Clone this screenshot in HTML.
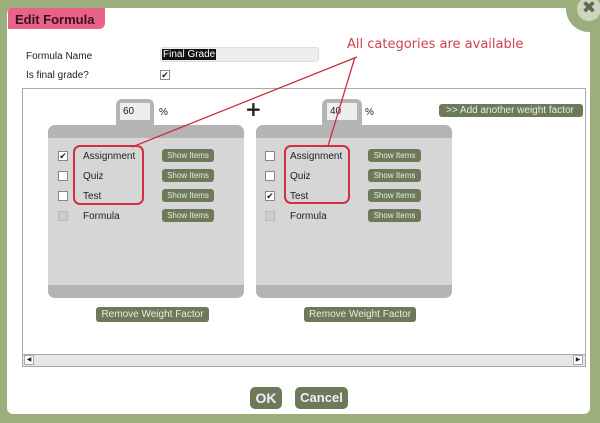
<!DOCTYPE html>
<html><head><meta charset="utf-8"><style>
*{margin:0;padding:0;box-sizing:border-box}
body{width:600px;height:423px;background:#9bae7b;position:relative;overflow:hidden;font-family:"Liberation Sans",sans-serif;font-size:10px;color:#222}
.a{position:absolute;white-space:nowrap}
.panel{left:7px;top:8px;width:583px;height:406px;background:#fff;border-radius:6px}
.title{left:8px;top:8px;width:97px;height:21px;background:#e8628a;border-radius:4px 0 6px 0;font:bold 13px "Liberation Sans",sans-serif;color:#3a1020;padding:4px 0 0 7px}
.btn{background:#6d7a5a;color:#e8ecdf;border-radius:3px;text-align:center;font-size:8px;line-height:13px;height:13px;overflow:hidden}
.cb{width:10px;height:10px;border:1px solid #888;background:#fff;font-size:9px;line-height:8px;text-align:center}
.card{background:#d6d6d6;border-radius:7px;overflow:hidden}
.hd{background:#b4b4b4}
.l{font-size:10px}
</style></head><body>
<div class="a panel"></div>
<div class="a" style="left:566px;top:-14px;width:46px;height:46px;border-radius:50%;background:#9bae7b"></div>
<div class="a" style="left:577px;top:-3px;width:24px;height:24px;border-radius:50%;background:#cdd5c0;color:#5e6a50;font:bold 17px 'DejaVu Sans';text-align:center;line-height:22px">✖</div>
<div class="a title">Edit Formula</div>
<div class="a" style="left:26px;top:51px">Formula Name</div>
<div class="a" style="left:160px;top:47px;width:159px;height:15px;background:#eee;border:1px solid #ddd;border-radius:3px"></div>
<div class="a" style="left:162px;top:49px;background:#111;color:#fff;padding:0 1px;line-height:11px">Final Grade</div>
<div class="a" style="left:26px;top:70px">Is final grade?</div>
<div class="a cb" style="left:160px;top:70px">✔</div>
<div class="a" style="left:22px;top:88px;width:564px;height:279px;border:1px solid #aaa"></div>
<!-- left -->
<div class="a" style="left:116px;top:99px;width:38px;height:30px;background:#b4b4b4;border-radius:6px 6px 0 0"></div>
<div class="a" style="left:120px;top:103px;width:30px;height:17px;background:#eee;padding:3px 0 0 3px">60</div>
<div class="a" style="left:159px;top:107px">%</div>
<div class="a" style="left:245px;top:97px;font:bold 20px 'DejaVu Sans'">+</div>
<div class="a card" style="left:48px;top:125px;width:196px;height:173px"><div class="hd" style="height:13px"></div><div class="hd" style="position:absolute;bottom:0;width:100%;height:13px"></div></div>
<!-- right -->
<div class="a" style="left:322px;top:99px;width:40px;height:30px;background:#b4b4b4;border-radius:6px 6px 0 0"></div>
<div class="a" style="left:327px;top:103px;width:30px;height:17px;background:#eee;padding:3px 0 0 3px">40</div>
<div class="a" style="left:365px;top:107px">%</div>
<div class="a btn" style="left:439px;top:104px;width:144px;font-size:10px;text-align:left;padding-left:7px">&gt;&gt; Add another weight factor</div>
<div class="a card" style="left:256px;top:125px;width:196px;height:173px"><div class="hd" style="height:13px"></div><div class="hd" style="position:absolute;bottom:0;width:100%;height:13px"></div></div>
<!-- rows -->
<div class="a cb" style="left:58px;top:151px">✔</div><div class="a" style="left:83px;top:151px">Assignment</div><div class="a btn" style="left:162px;top:149px;width:52px">Show Items</div>
<div class="a cb" style="left:58px;top:171px"></div><div class="a" style="left:83px;top:171px">Quiz</div><div class="a btn" style="left:162px;top:169px;width:52px">Show Items</div>
<div class="a cb" style="left:58px;top:191px"></div><div class="a" style="left:83px;top:191px">Test</div><div class="a btn" style="left:162px;top:189px;width:52px">Show Items</div>
<div class="a cb" style="left:58px;top:211px;background:#ccc;border-color:#bbb"></div><div class="a" style="left:83px;top:211px">Formula</div><div class="a btn" style="left:162px;top:209px;width:52px">Show Items</div>
<div class="a cb" style="left:265px;top:151px"></div><div class="a" style="left:290px;top:151px">Assignment</div><div class="a btn" style="left:368px;top:149px;width:53px">Show Items</div>
<div class="a cb" style="left:265px;top:171px"></div><div class="a" style="left:290px;top:171px">Quiz</div><div class="a btn" style="left:368px;top:169px;width:53px">Show Items</div>
<div class="a cb" style="left:265px;top:191px">✔</div><div class="a" style="left:290px;top:191px">Test</div><div class="a btn" style="left:368px;top:189px;width:53px">Show Items</div>
<div class="a cb" style="left:265px;top:211px;background:#ccc;border-color:#bbb"></div><div class="a" style="left:290px;top:211px">Formula</div><div class="a btn" style="left:368px;top:209px;width:53px">Show Items</div>
<div class="a btn" style="left:96px;top:307px;width:113px;height:15px;line-height:15px;font-size:10px">Remove Weight Factor</div>
<div class="a btn" style="left:304px;top:307px;width:112px;height:15px;line-height:15px;font-size:10px">Remove Weight Factor</div>
<!-- scrollbar -->
<div class="a" style="left:23px;top:354px;width:562px;height:12px;background:#e6e6e6;border-top:1px solid #aaa"></div>
<div class="a" style="left:24px;top:355px;width:10px;height:10px;background:#fff;border:1px solid #aaa;font-size:6px;line-height:8px;text-align:center">◀</div>
<div class="a" style="left:573px;top:355px;width:10px;height:10px;background:#fff;border:1px solid #aaa;font-size:6px;line-height:8px;text-align:center">▶</div>
<!-- ok/cancel -->
<div class="a btn" style="left:250px;top:387px;width:32px;height:22px;border-radius:5px;font:bold 14px 'Liberation Sans',sans-serif;line-height:22px;color:#eef">OK</div>
<div class="a btn" style="left:295px;top:387px;width:53px;height:22px;border-radius:5px;font:bold 13px 'Liberation Sans',sans-serif;line-height:22px;color:#eef">Cancel</div>
<!-- annotation -->
<div class="a" style="left:347px;top:37px;font-size:13px;color:#d04050;font-family:'DejaVu Sans',sans-serif">All categories are available</div>
<div class="a" style="left:73px;top:145px;width:71px;height:60px;border:2px solid #d03040;border-radius:7px"></div>
<div class="a" style="left:284px;top:145px;width:66px;height:59px;border:2px solid #d03040;border-radius:7px"></div>
<svg class="a" style="left:0;top:0" width="600" height="423"><path d="M357 57 L132 147 M355 57 L328 146" stroke="#c83040" stroke-width="1.3" fill="none"/></svg>
</body></html>
